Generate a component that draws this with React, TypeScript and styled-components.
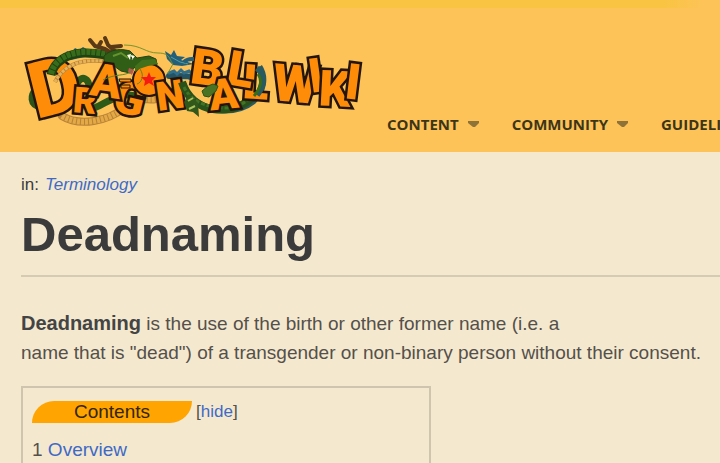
import React from "react";
import styled, { createGlobalStyle } from "styled-components";

const GlobalStyle = createGlobalStyle`
  * { box-sizing: border-box; }
  html { overflow-x: hidden; }
  body {
    margin: 0;
    background: #f4e9cf;
    color: #55504b;
    font-family: "Liberation Sans", Arial, sans-serif;
  }
`;

const Header = styled.header`
  background: #fdc359;
  overflow: hidden;
`;

const TopStrip = styled.div`
  height: 8px;
  background: linear-gradient(to right, #f9c441 92%, #fdc359 98%);
`;

const HeaderRow = styled.div`
  display: flex;
  align-items: flex-end;
  gap: 22px;
  padding: 24px 0 17px 20px;
`;

const LogoLink = styled.a`
  flex: none;
  display: block;
  margin-bottom: 5px;
`;

const LogoArt = styled.svg`
  display: block;
  width: 345px;
  height: 98px;
`;

const Nav = styled.nav`
  display: flex;
  gap: 32px;
`;

const NavButton = styled.button`
  display: flex;
  align-items: center;
  gap: 9px;
  padding: 0;
  border: 0;
  background: none;
  color: #3d3517;
  font: 700 15px/22px "Open Sans", sans-serif;
  text-transform: uppercase;
  white-space: nowrap;
  cursor: pointer;
`;

const Caret = styled.svg`
  width: 12px;
  height: 8px;
  fill: #8d7338;
`;

const Page = styled.main`
  padding: 22px 0 0 21px;
`;

const Link = styled.a`
  color: #4069c6;
  text-decoration: none;
`;

const Category = styled.div`
  display: flex;
  gap: 6px;
  font-size: 17px;
  line-height: 22px;
`;

const CategoryLabel = styled.span`
  color: #3b3b3c;
`;

const CategoryLink = styled(Link)`
  font-style: italic;
`;

const Title = styled.h1`
  margin: 9px 0 12px;
  color: #3b3b3c;
  font-size: 49px;
  line-height: 58px;
`;

const Rule = styled.hr`
  height: 2px;
  margin: 0;
  border: 0;
  background: #d5cab3;
`;

const Intro = styled.p`
  margin: 32px 0 19px;
  font-size: 19px;
  line-height: 29px;
  white-space: nowrap;
`;

const Term = styled.b`
  color: #444444;
  font-size: 20px;
`;

const Toc = styled.section`
  max-width: 410px;
  padding: 13px 9px 0;
  border: 2px solid #cfc5ae;
  border-bottom: 0;
`;

const TocHead = styled.div`
  display: flex;
  align-items: center;
  gap: 4px;
`;

const TocTitle = styled.h2`
  width: 160px;
  margin: 0;
  border-radius: 24px 0 24px 0;
  background: #ffa400;
  color: #33260a;
  font-size: 19px;
  font-weight: 400;
  line-height: 22px;
  text-align: center;
`;

const HideToggle = styled.button`
  padding: 0;
  border: 0;
  background: none;
  color: #55504b;
  font: 17px/22px "Liberation Sans", Arial, sans-serif;
  cursor: pointer;

  span { color: #4069c6; }
`;

const TocList = styled.ul`
  margin: 13px 0 0;
  padding: 0;
  list-style: none;
  font-size: 19px;
  line-height: 27px;
`;

type LetterSpec = { ch: string; x: number; y: number; size: number; turn: number };

const LogoLetter = styled.text`
  font-family: Roboto, sans-serif;
  font-weight: 900;
  fill: #ff8c08;
  stroke: #23150a;
  stroke-width: 5px;
  stroke-linejoin: miter;
  paint-order: stroke;
  text-anchor: middle;
`;

/* x and y are the centre of the letter's baseline */
const Letter = ({ ch, x, y, size, turn }: LetterSpec) => (
  <LogoLetter x={x} y={y} fontSize={size} transform={`rotate(${turn} ${x} ${y})`}>
    {ch}
  </LogoLetter>
);

const wikiLetters: LetterSpec[] = [
  { ch: "W", x: 294, y: 102, size: 52, turn: 5 },
  { ch: "I", x: 318, y: 92, size: 48, turn: -8 },
  { ch: "K", x: 334, y: 106, size: 50, turn: 3 },
  { ch: "I", x: 351, y: 99, size: 50, turn: 7 },
];

const Logo = () => (
  <LogoArt viewBox="20 32 345 98" role="img" aria-label="Dragon Ball Wiki">
    <g fill="none" strokeLinecap="round">
      <path d="M38 88C31 96 31 104 41 106" stroke="#2c5319" strokeWidth="9" />
      <path d="M62 116C80 127 108 121 124 108S146 101 156 99" stroke="#b98238" strokeWidth="8" />
      <path d="M62 116C80 127 108 121 124 108S146 101 156 99" stroke="#e2a944" strokeWidth="6" strokeDasharray="3 1" strokeLinecap="butt" />
      <path d="M78 82C82 75 89 79 89 87M94 108C106 104 107 99 119 98M120 94L137 96" stroke="#2e5a18" strokeWidth="7" />
      <path d="M169 76C184 76 190 75 197 80" stroke="#245464" strokeWidth="6" />
      <path d="M169 73L174 71L177 74L181 70L184 73L189 71L193 75" stroke="#2f6f8b" strokeWidth="3" />
    </g>
    <path d="M165 51L171 55L174 50L177 56L185 57L181 60L194 64L182 66L173 65L167 59Z" fill="#245f79" />
    <path d="M171 57L180 62L188 64" fill="none" stroke="#52a0a0" />

    <Letter ch="G" x={126} y={114} size={45} turn={14} />
    <Letter ch="D" x={61} y={113} size={78} turn={-14} />
    <Letter ch="R" x={84} y={113} size={36} turn={5} />

    <path d="M55 82C61 70 73 62 88 61C98 60 106 61 114 64" fill="none" stroke="#b98238" strokeWidth="4" />
    <path d="M55 82C61 70 73 62 88 61C98 60 106 61 114 64" fill="none" stroke="#e5b258" strokeWidth="3" strokeDasharray="3 1" />
    <path d="M63 57L67 51L71 53L75 48L79 50L83 47L88 50L92 49L98 54L71 60Z" fill="#245f79" />
    <path d="M51 75C54 61 68 54 82 53C96 52 108 56 121 57" fill="none" stroke="#1e4212" strokeWidth="9" />
    <path d="M51 74C54 60 68 53 82 52C96 51 108 55 121 56" fill="none" stroke="#376c1b" strokeWidth="6" strokeDasharray="4 1" />
    <path d="M90 40L95 46L105 49L113 54M98 47L101 42M105 38L108 45L116 52M111 47L121 46" fill="none" stroke="#5a3916" strokeWidth="4" strokeLinecap="round" strokeLinejoin="round" />
    <path d="M104 56C112 48 123 49 130 51L137 58L149 56L156 59L157 65L149 68L135 67L130 73L121 71L114 66L104 67Z" fill="#305e17" stroke="#234312" />
    <path d="M113 56L121 53L128 58" fill="none" stroke="#66932d" strokeWidth="2" />
    <path d="M127 55L131 54L130 60ZM131 55L135 56L132 60Z" fill="#ffffe8" />
    <path d="M131 57L132 59" stroke="#14290d" strokeWidth="1" />
    <path d="M124 45C142 45 145 53 158 53S169 60 173 64L168 73" fill="none" stroke="#73942b" />

    <Letter ch="A" x={104} y={97} size={46} turn={8} />
    <path d="M119 79L131 79L131 82L120 82ZM121 85H130V88H121Z" fill="#ff8c08" stroke="#23150a" strokeWidth="1" />
    <circle cx="149" cy="80" r="16" fill="#ff8c08" stroke="#23150a" strokeWidth="2" />
    <path d="M135 66L142 60L155 59L158 64L148 66L139 69L135 72Z" fill="#42701b" />
    <path d="M129 68L134 70L132 75L128 72Z" fill="#c45550" />
    <path d="M103 80C116 73 124 77 132 71M140 69C145 76 141 83 137 84" fill="none" stroke="#5f862b" />
    <path d="M149 72L151 77L156 77L152 81L154 86L149 83L144 86L145 81L141 77L147 77Z" fill="#f51b12" />
    <Letter ch="N" x={172} y={109} size={40} turn={-8} />

    <Letter ch="B" x={205} y={85} size={50} turn={8} />
    <path d="M184 62C188 58 191 59 194 59" fill="none" stroke="#245f79" strokeWidth="4" />
    <path d="M259 67C266 78 263 91 253 101C237 114 208 112 195 101C188 96 185 91 183 84" fill="none" stroke="#285a60" strokeWidth="7" />
    <path d="M182 82C187 98 199 107 213 109C233 112 251 103 257 91" fill="none" stroke="#29511a" strokeWidth="8" />
    <path d="M184 87C191 102 207 107 223 108S248 101 255 91" fill="none" stroke="#437323" strokeWidth="3" strokeDasharray="4 2" />
    <path d="M184 102L189 94L198 103L199 117L193 112L187 111Z" fill="#31571a" />
    <path d="M188 101L193 98M189 109L195 106" stroke="#acc35b" strokeWidth="2" />
    <Letter ch="L" x={255} y={99} size={48} turn={4} />
    <Letter ch="L" x={238} y={86} size={49} turn={10} />
    <Letter ch="A" x={225} y={109} size={43} turn={-6} />
    <path d="M202 91L208 86L213 84L218 86L216 91L209 97L204 96Z" fill="#497323" stroke="#29531a" />
    <path d="M257 68C266 76 264 86 257 95" fill="none" stroke="#285a60" strokeWidth="6" />
    <path d="M258 74C263 81 260 89 254 96" fill="none" stroke="#376c1b" strokeWidth="3" />
    {wikiLetters.map((letter) => <Letter key={letter.x} {...letter} />)}
  </LogoArt>
);

const DownCaret = () => (
  <Caret viewBox="0 0 12 8" aria-hidden="true">
    <path d="M0 1H11V3L7 7H5L0 3Z" />
  </Caret>
);

export default function App() {
  return (
    <>
      <GlobalStyle />
      <Header>
        <TopStrip />
        <HeaderRow>
          <LogoLink href="#home" aria-label="Dragon Ball Wiki"><Logo /></LogoLink>
          <Nav aria-label="Wiki">
            <NavButton type="button">Content <DownCaret /></NavButton>
            <NavButton type="button">Community <DownCaret /></NavButton>
            <NavButton type="button">Guidelines <DownCaret /></NavButton>
          </Nav>
        </HeaderRow>
      </Header>
      <Page>
        <Category>
          <CategoryLabel>in:</CategoryLabel>
          <CategoryLink href="#terminology">Terminology</CategoryLink>
        </Category>
        <Title>Deadnaming</Title>
        <Rule />
        <Intro>
          <Term>Deadnaming</Term> is the use of the birth or other former name (i.e. a<br />
          name that is "dead") of a transgender or non-binary person without their consent.
        </Intro>
        <Toc aria-labelledby="toc-title">
          <TocHead>
            <TocTitle id="toc-title">Contents</TocTitle>
            <HideToggle type="button">[<span>hide</span>]</HideToggle>
          </TocHead>
          <TocList>
            <li>1 <Link href="#overview">Overview</Link></li>
          </TocList>
        </Toc>
      </Page>
    </>
  );
}
